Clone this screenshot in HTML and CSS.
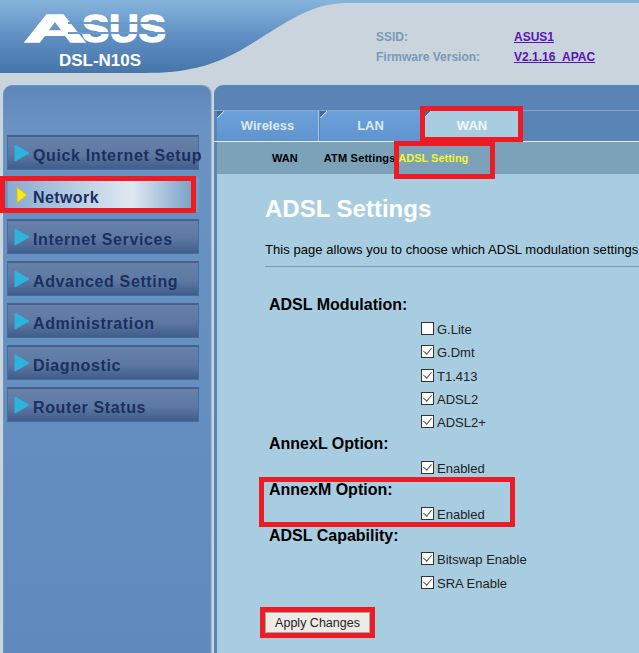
FILE: index.html
```html
<!DOCTYPE html>
<html>
<head>
	<title>ADSL Settings</title>
	<link rel="stylesheet" href="styles.css">
</head>
<body>
	<div class="page">
		<div class="header">
			<svg class="header-bg" width="639" height="73" viewBox="0 0 639 73">
				<defs>
					<linearGradient id="wave" x1="0" y1="0" x2="0" y2="1">
						<stop offset="0" stop-color="#85b4dc"/>
						<stop offset="0.5" stop-color="#5f8fc2"/>
						<stop offset="1" stop-color="#4675aa"/>
					</linearGradient>
				</defs>
				<path d="M0 0H639V3H345C318 4 300 14 280 26C250 44 225 64 185 70C170 73 150 73 130 73H0Z" fill="url(#wave)"/>
			</svg>
			<div class="brand">
				<svg class="logo" width="146" height="32" viewBox="0 0 146 32">
					<text class="logo-text" x="0" y="30" textLength="62" lengthAdjust="spacingAndGlyphs">A</text>
					<text class="logo-text" x="58" y="30" textLength="84" lengthAdjust="spacingAndGlyphs">SUS</text>
					<rect class="logo-cut" x="44" y="10" width="100" height="2"/>
					<rect class="logo-cut" x="44" y="20" width="100" height="2"/>
				</svg>
				<div class="model">DSL-N10S</div>
			</div>
			<div class="info">
				<div class="info-row"><span class="info-label">SSID:</span><a class="info-link" href="#">ASUS1</a></div>
				<div class="info-row"><span class="info-label">Firmware Version:</span><a class="info-link" href="#">V2.1.16_APAC</a></div>
			</div>
		</div>

		<div class="columns">
			<div class="sidebar">
				<div class="menu-item"><svg class="arrow" width="16" height="18" viewBox="0 0 16 18"><path d="M1 1L15 9L1 17Z" fill="#2db4dc" stroke="#2db4dc" stroke-linejoin="round"/></svg>Quick Internet Setup</div>
				<div class="menu-item active"><svg class="arrow" width="16" height="18" viewBox="0 0 16 18"><path d="M3 1L13 9L3 17Z" fill="#f4ee14" stroke="#c9b84a" stroke-linejoin="round"/></svg>Network</div>
				<div class="menu-item"><svg class="arrow" width="16" height="18" viewBox="0 0 16 18"><path d="M1 1L15 9L1 17Z" fill="#2db4dc" stroke="#2db4dc" stroke-linejoin="round"/></svg>Internet Services</div>
				<div class="menu-item"><svg class="arrow" width="16" height="18" viewBox="0 0 16 18"><path d="M1 1L15 9L1 17Z" fill="#2db4dc" stroke="#2db4dc" stroke-linejoin="round"/></svg>Advanced Setting</div>
				<div class="menu-item"><svg class="arrow" width="16" height="18" viewBox="0 0 16 18"><path d="M1 1L15 9L1 17Z" fill="#2db4dc" stroke="#2db4dc" stroke-linejoin="round"/></svg>Administration</div>
				<div class="menu-item"><svg class="arrow" width="16" height="18" viewBox="0 0 16 18"><path d="M1 1L15 9L1 17Z" fill="#2db4dc" stroke="#2db4dc" stroke-linejoin="round"/></svg>Diagnostic</div>
				<div class="menu-item"><svg class="arrow" width="16" height="18" viewBox="0 0 16 18"><path d="M1 1L15 9L1 17Z" fill="#2db4dc" stroke="#2db4dc" stroke-linejoin="round"/></svg>Router Status</div>
			</div>

			<div class="main">
				<div class="tabs">
					<div class="tab">Wireless</div>
					<div class="tab">LAN</div>
					<div class="tab current">WAN</div>
				</div>
				<div class="subnav">
					<span class="sub-wan">WAN</span>
					<span class="sub-atm">ATM Settings</span>
					<span class="sub-current">ADSL Setting</span>
				</div>
				<div class="content">
					<h1>ADSL Settings</h1>
					<p class="intro">This page allows you to choose which ADSL modulation settings</p>
					<div class="rule"></div>

					<div class="group-title first">ADSL Modulation:</div>
					<label class="check-row r23"><input type="checkbox">G.Lite</label>
					<label class="check-row r23"><input type="checkbox" checked>G.Dmt</label>
					<label class="check-row r24"><input type="checkbox" checked>T1.413</label>
					<label class="check-row r23"><input type="checkbox" checked>ADSL2</label>
					<label class="check-row r23"><input type="checkbox" checked>ADSL2+</label>
					<div class="group-title">AnnexL Option:</div>
					<label class="check-row r24"><input type="checkbox" checked>Enabled</label>
					<div class="group-title">AnnexM Option:</div>
					<label class="check-row r24"><input type="checkbox" checked>Enabled</label>
					<div class="group-title short">ADSL Capability:</div>
					<label class="check-row r24"><input type="checkbox" checked>Bitswap Enable</label>
					<label class="check-row r24"><input type="checkbox" checked>SRA Enable</label>
					<button class="apply" type="button">Apply Changes</button>
				</div>
			</div>
		</div>

		<!-- red annotation boxes drawn on top of the screenshot -->
		<div class="mark mark-network"></div>
		<div class="mark mark-wan"></div>
		<div class="mark mark-adsl"></div>
		<div class="mark mark-annexm"></div>
		<div class="mark mark-apply"></div>
	</div>
</body>
</html>
```

FILE: styles.css
```css
html, body {
	margin: 0;
	padding: 0;
}
body {
	font-family: "Liberation Sans", Arial, sans-serif;
	background-color: #c9d4dc;
}
.page {
	position: relative;
	width: 639px;
	height: 653px;
	overflow: hidden;
}

/* header */
.header {
	position: relative;
	display: flex;
	height: 73px;
}
.header-bg {
	position: absolute;
	left: 0;
	top: 0;
}
.brand {
	position: relative;
	width: 376px;
	box-sizing: border-box;
	padding: 12px 0 0 24px;
}
.logo {
	display: block;
	overflow: visible;
}
.logo-text {
	font-family: "Liberation Sans", Arial, sans-serif;
	font-weight: bold;
	font-size: 39px;
	fill: #fff;
	stroke: #fff;
	stroke-width: 1.5px;
}
.logo-cut {
	fill: #6a99ca;
}
.model {
	width: 152px;
	margin-top: 7px;
	color: #fff;
	font-size: 17px;
	font-weight: bold;
	line-height: 20px;
	text-align: center;
}
.info {
	position: relative;
	padding-top: 30px;
}
.info-row {
	display: flex;
	height: 20px;
	font-size: 12px;
	font-weight: bold;
	line-height: 14px;
}
.info-label {
	width: 138px;
	color: #7b98b8;
}
.info-link {
	color: #5a12b8;
}

/* columns */
.columns {
	display: flex;
	margin-top: 12px;
	height: 568px;
}
.sidebar {
	box-sizing: border-box;
	width: 208px;
	margin-left: 3px;
	padding: 49px 0 0 3px;
	background: linear-gradient(#5d87b8, #6a93c4 40px, #5f8abd);
	border: 1px solid #6e95c2;
	border-bottom: 0;
	border-radius: 9px 9px 0 0;
	box-shadow: 1px 0 0 #a8b6c2;
}
.menu-item {
	display: flex;
	align-items: center;
	width: 192px;
	height: 35px;
	margin-bottom: 7px;
	box-sizing: border-box;
	padding: 5px 0 0 6px;
	border: 1px solid #4a6c9a;
	border-top: 2px solid #44628f;
	background: linear-gradient(#6781a9, #5d78a2 55%, #3f5d8b);
	color: #1b2f60;
	font-size: 16px;
	font-weight: bold;
	letter-spacing: 0.63px;
	white-space: nowrap;
}
.menu-item .arrow {
	flex: none;
	margin-right: 3px;
	margin-top: -6px;
}
.menu-item.active {
	background: linear-gradient(90deg, #88abd0, #dfe9f2 65%, #6f9ac2);
	border-color: #6f9ac2;
	letter-spacing: 0.4px;
}

/* main panel */
.main {
	flex: 1;
	box-sizing: border-box;
	margin-left: 3px;
	padding-left: 3px;
	background-color: #5a83b6;
	border-radius: 9px 0 0 0;
	min-width: 0;
}
.tabs {
	display: flex;
	gap: 1px;
	height: 30px;
	margin: 25px 0 0 -3px;
	padding-left: 3px;
	border-top: 1px solid #8aa6c6;
	border-bottom: 1px solid #e6eef4;
}
.tab {
	position: relative;
	box-sizing: border-box;
	width: 102px;
	height: 30px;
	line-height: 30px;
	background: linear-gradient(#6da1da, #5f94d0);
	border-right: 1px solid #a9c4de;
	color: #dfeaf4;
	font-size: 13px;
	font-weight: bold;
	text-align: center;
}
.tab::before {
	content: "";
	position: absolute;
	left: 0;
	top: 0;
	width: 7px;
	height: 7px;
	background: linear-gradient(135deg, #47699c 46%, #c4d8ea 50%, transparent 60%);
}
.tab.current {
	width: 96px;
	margin-left: 1px;
	background: #a9cde0;
	border-right: 0;
	color: #f2f7fa;
}
.subnav {
	height: 32px;
	background-color: #7ba2b8;
	color: #000;
	font-size: 11px;
	font-weight: bold;
	line-height: 32px;
	white-space: nowrap;
}
.sub-wan {
	margin-left: 55px;
}
.sub-atm {
	margin-left: 23px;
	letter-spacing: 0.2px;
}
.sub-current {
	color: #f2f62a;
}
.content {
	height: 480px;
	padding-left: 48px;
	background-color: #a9cde0;
	color: #000;
	white-space: nowrap;
	overflow: hidden;
}
h1 {
	margin: 0;
	padding-top: 21px;
	color: #fff;
	font-size: 24px;
	font-weight: bold;
	line-height: 27px;
}
.intro {
	margin: 21px 0 0;
	font-size: 13px;
	line-height: 14px;
	letter-spacing: 0.05px;
}
.rule {
	height: 1px;
	margin-top: 9px;
	background-color: #7f97a8;
}
.group-title {
	height: 22px;
	margin-left: 4px;
	font-size: 16px;
	font-weight: bold;
	line-height: 20px;
}
.group-title.first {
	margin-top: 28px;
	height: 23px;
}
.group-title.short {
	height: 21px;
}
.check-row {
	display: flex;
	align-items: center;
	margin-left: 156px;
	color: #222;
	font-size: 13px;
}
.r23 {
	height: 23px;
}
.r24 {
	height: 24px;
}
.check-row input {
	appearance: none;
	position: relative;
	flex: none;
	width: 13px;
	height: 13px;
	margin: -2px 3px 0 0;
	background-color: #fff;
	border: 1px solid #333;
	box-sizing: border-box;
}
.check-row input:checked::after {
	content: "";
	position: absolute;
	left: 3px;
	top: 0;
	width: 4px;
	height: 7px;
	border: solid #555;
	border-width: 0 1.5px 1.5px 0;
	transform: rotate(40deg);
}
.apply {
	display: block;
	width: 105px;
	height: 21px;
	margin-top: 17px;
	padding: 0;
	background-color: #eeeae6;
	border: 1px solid #a9a5a2;
	color: #222;
	font-family: "Liberation Sans", Arial, sans-serif;
	font-size: 12.5px;
}

/* red annotation boxes */
.mark {
	position: absolute;
	box-sizing: border-box;
	border: 5px solid #ed1c24;
}
.mark-network {
	left: 0;
	top: 176px;
	width: 196px;
	height: 37px;
}
.mark-wan {
	left: 420px;
	top: 106px;
	width: 103px;
	height: 36px;
}
.mark-adsl {
	left: 394px;
	top: 141px;
	width: 101px;
	height: 38px;
}
.mark-annexm {
	left: 259px;
	top: 477px;
	width: 256px;
	height: 50px;
}
.mark-apply {
	left: 260px;
	top: 607px;
	width: 115px;
	height: 31px;
}
```
